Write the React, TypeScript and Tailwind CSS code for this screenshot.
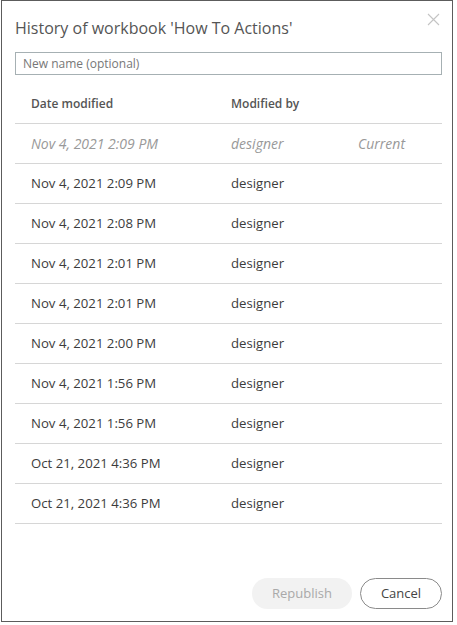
const rows = [
  { date: 'Nov 4, 2021 2:09 PM', by: 'designer' },
  { date: 'Nov 4, 2021 2:08 PM', by: 'designer' },
  { date: 'Nov 4, 2021 2:01 PM', by: 'designer' },
  { date: 'Nov 4, 2021 2:01 PM', by: 'designer' },
  { date: 'Nov 4, 2021 2:00 PM', by: 'designer' },
  { date: 'Nov 4, 2021 1:56 PM', by: 'designer' },
  { date: 'Nov 4, 2021 1:56 PM', by: 'designer' },
  { date: 'Oct 21, 2021 4:36 PM', by: 'designer' },
  { date: 'Oct 21, 2021 4:36 PM', by: 'designer' },
]

export default function App() {
  return (
    <div className="w-[457px] h-[625px] bg-white font-['Open_Sans',sans-serif]">
      <div className="relative ml-px w-[452px] h-[622px] border border-[#5c5c5c] flex flex-col pl-[13px]">
        <button type="button" className="absolute right-[12px] top-[12px] text-[#c4c4c4]">
          <svg width="13" height="13" viewBox="0 0 13 13" fill="none" stroke="currentColor" strokeWidth="1.1">
            <path d="M1 1 L12 12 M12 1 L1 12" />
          </svg>
        </button>
        <h2 className="mt-[16px] text-[16px] leading-[22px] text-[#555]">
          History of workbook 'How To Actions'
        </h2>
        <input
          type="text"
          placeholder="New name (optional)"
          className="mt-[13px] h-[23px] w-[427px] border border-[#a6b0b3] px-[7px] text-[12px] text-[#333] placeholder:text-[#777] outline-none"
        />
        <div className="mt-[9px] w-[427px]">
          <div className="flex h-[40px] items-center border-b border-[#d6d6d6] text-[12px] font-semibold text-[#555]">
            <div className="w-[200px] pl-[16px]">Date modified</div>
            <div className="w-[127px] pl-[16px]">Modified by</div>
          </div>
          <div className="flex h-[40px] items-center border-b border-[#d6d6d6] text-[14px] italic text-[#999]">
            <div className="w-[200px] pl-[16px]">Nov 4, 2021 2:09 PM</div>
            <div className="w-[127px] pl-[16px]">designer</div>
            <div className="pl-[16px]">Current</div>
          </div>
          {rows.map((r, i) => (
            <div key={i} className="flex h-[40px] items-center border-b border-[#d6d6d6] text-[13.2px] text-[#3c3c3c]">
              <div className="w-[200px] pl-[16px]">{r.date}</div>
              <div className="w-[127px] pl-[16px]">{r.by}</div>
            </div>
          ))}
        </div>
        <div className="mt-auto mb-[12px] flex justify-end gap-[8px] w-[427px]">
          <button type="button" className="h-[31px] w-[100px] rounded-full bg-[#f2f2f2] text-[13px] text-[#a9a9a9]">
            Republish
          </button>
          <button type="button" className="h-[31px] w-[82px] rounded-full border border-[#8a8a8a] text-[13px] text-[#444]">
            Cancel
          </button>
        </div>
      </div>
    </div>
  )
}
